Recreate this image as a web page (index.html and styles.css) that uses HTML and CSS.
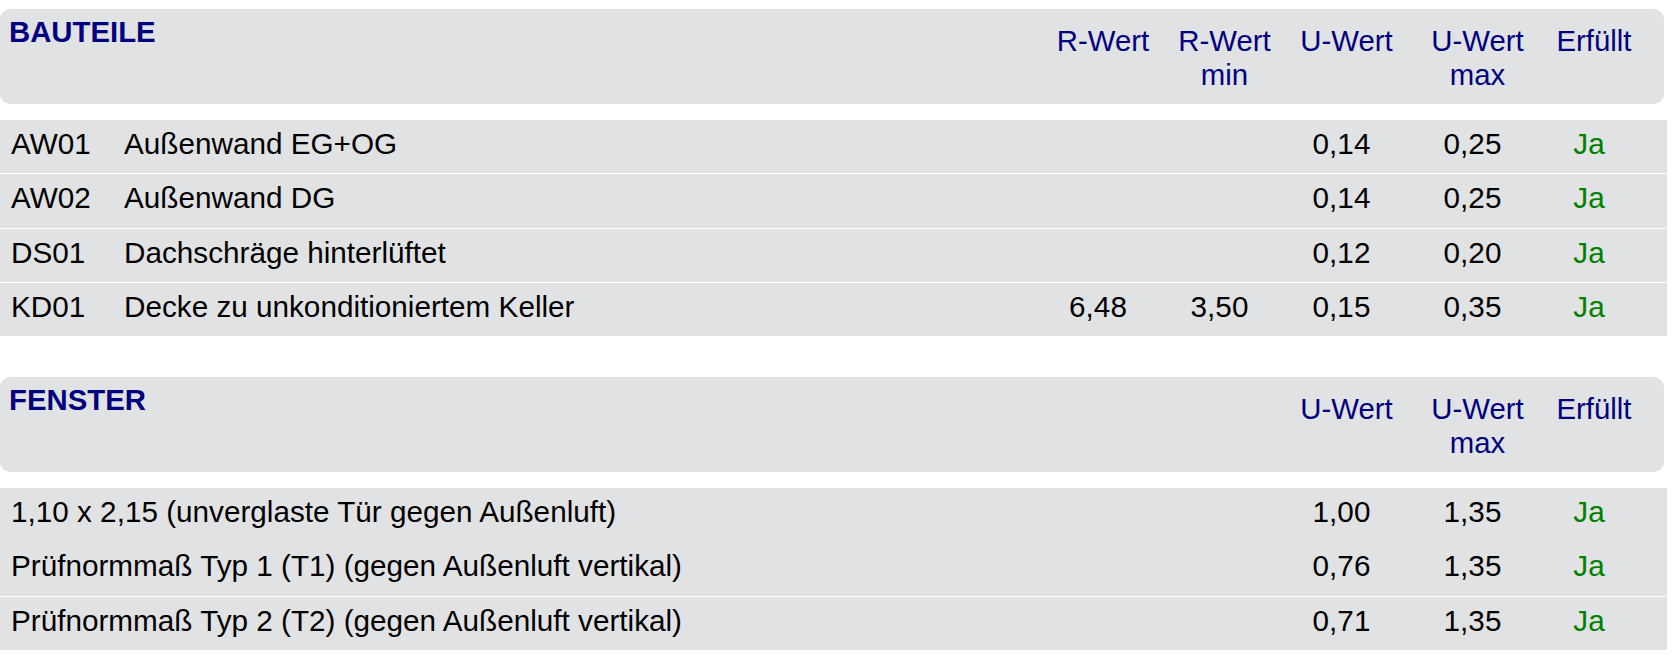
FILE: index.html
```html
<!DOCTYPE html>
<html lang="de">
<head>
<meta charset="utf-8">
<title>Bauteile und Fenster</title>
<link rel="stylesheet" href="styles.css">
</head>
<body>
<section class="block">
  <div class="head">
    <div class="title">BAUTEILE</div>
    <div class="colhead">R-Wert</div>
    <div class="colhead">R-Wert<br>min</div>
    <div class="colhead">U-Wert</div>
    <div class="colhead">U-Wert<br>max</div>
    <div class="colhead">Erfüllt</div>
  </div>
  <div class="rows">
    <div class="row">
      <div class="code">AW01</div><div class="name">Außenwand EG+OG</div>
      <div class="val"></div><div class="val"></div><div class="val">0,14</div><div class="val">0,25</div><div class="val ok">Ja</div>
    </div>
    <div class="row">
      <div class="code">AW02</div><div class="name">Außenwand DG</div>
      <div class="val"></div><div class="val"></div><div class="val">0,14</div><div class="val">0,25</div><div class="val ok">Ja</div>
    </div>
    <div class="row">
      <div class="code">DS01</div><div class="name">Dachschräge hinterlüftet</div>
      <div class="val"></div><div class="val"></div><div class="val">0,12</div><div class="val">0,20</div><div class="val ok">Ja</div>
    </div>
    <div class="row">
      <div class="code">KD01</div><div class="name">Decke zu unkonditioniertem Keller</div>
      <div class="val">6,48</div><div class="val">3,50</div><div class="val">0,15</div><div class="val">0,35</div><div class="val ok">Ja</div>
    </div>
  </div>
</section>

<section class="block fenster">
  <div class="head">
    <div class="title">FENSTER</div>
    <div class="colhead">U-Wert</div>
    <div class="colhead">U-Wert<br>max</div>
    <div class="colhead">Erfüllt</div>
  </div>
  <div class="rows">
    <div class="row row--nosep">
      <div class="wide">1,10 x 2,15 (unverglaste Tür gegen Außenluft)</div>
      <div class="val">1,00</div><div class="val">1,35</div><div class="val ok">Ja</div>
    </div>
    <div class="row">
      <div class="wide">Prüfnormmaß Typ 1 (T1) (gegen Außenluft vertikal)</div>
      <div class="val">0,76</div><div class="val">1,35</div><div class="val ok">Ja</div>
    </div>
    <div class="row">
      <div class="wide">Prüfnormmaß Typ 2 (T2) (gegen Außenluft vertikal)</div>
      <div class="val">0,71</div><div class="val">1,35</div><div class="val ok">Ja</div>
    </div>
  </div>
</section>
</body>
</html>
```

FILE: styles.css
```css
html, body {
  margin: 0;
  background: #ffffff;
}

body {
  padding-top: 9px;
  font-family: "Liberation Sans", Arial, sans-serif;
  font-size: 22pt;
  color: #000000;
}

.block + .block {
  margin-top: 40.7px;
}

.head,
.row {
  display: grid;
  grid-template-columns: 124px 1fr 122px 121px 123px 139px 94px;
  box-sizing: border-box;
  background: #e1e2e4;
}

.head {
  width: 1664px;
  height: 95px;
  padding-right: 23px;
  border-radius: 10px;
  margin-bottom: 16px;
  color: #000080;
  line-height: 33.5px;
}

.title {
  grid-column: 1 / 3;
  font-weight: bold;
  padding: 6px 0 0 9px;
}

.fenster .title {
  grid-column: 1 / 5;
}

.colhead {
  text-align: center;
  padding-top: 15px;
}

.rows {
  width: 1667px;
}

.row {
  width: 1667px;
  padding: 7px 26px 12.33px 0;
  font-size: 29.7px;
  line-height: 34px;
  border-bottom: 1px solid #ffffff;
}

.row:last-child {
  border-bottom: 0;
}

.row--nosep {
  border-bottom-color: #e1e2e4;
}

.code {
  padding-left: 11px;
}

.wide {
  grid-column: 1 / 5;
  padding-left: 11px;
  white-space: nowrap;
}

.val {
  text-align: center;
  padding-right: 10px;
}

.ok {
  color: #008000;
}
```
